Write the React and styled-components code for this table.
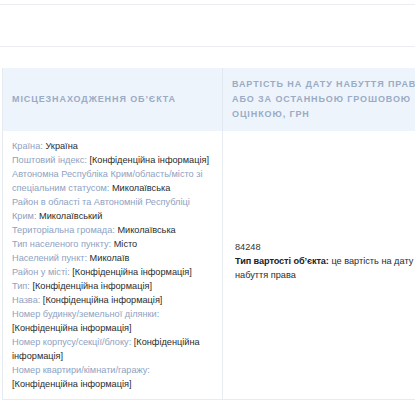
import React from 'react';
import styled, { createGlobalStyle } from 'styled-components';

const GlobalStyle = createGlobalStyle`
  html, body {
    margin: 0;
    padding: 0;
    background: #fff;
    overflow: hidden;
  }
  body {
    font-family: "Liberation Sans", Arial, sans-serif;
    color: #333;
  }
`;

const Page = styled.div`
  width: 415px;
  height: 415px;
  overflow: hidden;
  padding-left: 2px;
  box-sizing: border-box;
`;

const Rule = styled.div`
  height: ${p => p.h}px;
  margin-left: -2px;
  border-bottom: 1px solid #ebedf0;
`;

const Table = styled.table`
  margin-top: 21px;
  border-collapse: collapse;
  table-layout: fixed;
  width: 449px;
  border-left: 1px solid #e6ebf1;
`;

const HeadCell = styled.th`
  width: ${p => p.w}px;
  padding: 9px 9px;
  background: #eef4fb;
  color: #9aabc6;
  font-size: 9px;
  font-weight: bold;
  letter-spacing: 0.9px;
  line-height: 15px;
  text-transform: uppercase;
  text-align: left;
  vertical-align: middle;
  border-right: 1px solid #e2e9f2;
`;

const Cell = styled.td`
  padding: 8px ${p => p.pr}px ${p => p.pb}px ${p => p.pl}px;
  font-size: 9.2px;
  line-height: 14px;
  vertical-align: middle;
  border-right: 1px solid #e8ecf0;
  border-bottom: 1px solid #e8ecf0;
`;

const Line = styled.div``;

const Label = styled.span`
  color: #8ea2c2;
`;

const Value = styled.span`
  color: #2b2b2b;
`;

const Strong = styled.b`
  color: #222;
  font-weight: bold;
  letter-spacing: -0.1px;
`;

const location = [
  ['Країна:', 'Україна'],
  ['Поштовий індекс:', '[Конфіденційна інформація]'],
  ['Автономна Республіка Крим/область/місто зі спеціальним статусом:', 'Миколаївська'],
  ['Район в області та Автономній Республіці Крим:', 'Миколаївський'],
  ['Територіальна громада:', 'Миколаївська'],
  ['Тип населеного пункту:', 'Місто'],
  ['Населений пункт:', 'Миколаїв'],
  ['Район у місті:', '[Конфіденційна інформація]'],
  ['Тип:', '[Конфіденційна інформація]'],
  ['Назва:', '[Конфіденційна інформація]'],
  ['Номер будинку/земельної ділянки:', '[Конфіденційна інформація]'],
  ['Номер корпусу/секції/блоку:', '[Конфіденційна інформація]'],
  ['Номер квартири/кімнати/гаражу:', '[Конфіденційна інформація]'],
];

export default function App() {
  return (
    <Page>
      <GlobalStyle />
      <Rule h={4} />
      <Rule h={41} />
      <Table>
        <thead>
          <tr>
            <HeadCell w={201}>Місцезнаходження об’єкта</HeadCell>
            <HeadCell w={210}>Вартість на дату набуття права або за останньою грошовою оцінкою, грн</HeadCell>
          </tr>
        </thead>
        <tbody>
          <tr>
            <Cell pl={9} pr={9} pb={8}>
              {location.map(([label, value]) => (
                <Line key={label}>
                  <Label>{label}</Label> <Value>{value}</Value>
                </Line>
              ))}
            </Cell>
            <Cell pl={12} pr={15} pb={16}>
              <Line>84248</Line>
              <Line>
                <Strong>Тип вартості об’єкта:</Strong> <Value>це вартість на дату набуття права</Value>
              </Line>
            </Cell>
          </tr>
        </tbody>
      </Table>
    </Page>
  );
}
